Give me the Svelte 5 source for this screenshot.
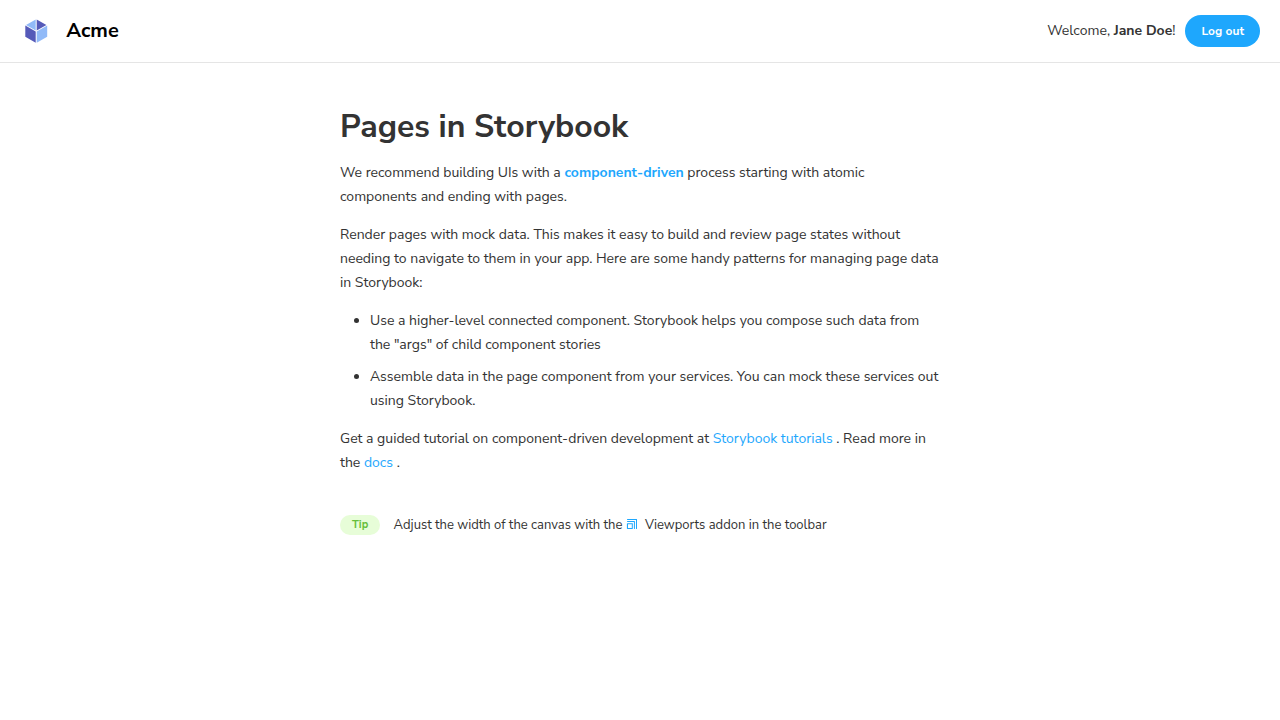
<script>
  let user = $state({ name: 'Jane Doe' });
</script>

<article>
  <header>
    <div class="storybook-header">
      <div class="brand">
        <svg width="32" height="32" viewBox="0 0 32 32" xmlns="http://www.w3.org/2000/svg" aria-hidden="true">
          <g fill="none" fill-rule="evenodd">
            <path d="M10 0h12a10 10 0 0110 10v12a10 10 0 01-10 10H10A10 10 0 010 22V10A10 10 0 0110 0z" fill="#FFF" />
            <path d="M5.3 10.6l10.4 6v11.1l-10.4-6v-11zm11.4-6.2l9.7 5.5-9.7 5.6V4.4z" fill="#555AB9" />
            <path d="M27.2 10.6v11.2l-10.5 6V16.5l10.5-6zM15.7 4.4v11L6 10l9.7-5.5z" fill="#91BAF8" />
          </g>
        </svg>
        <h1>Acme</h1>
      </div>
      <div class="account">
        {#if user}
          <span class="welcome">Welcome, <b>{user.name}</b>!</span>
        {/if}
        <button type="button">Log out</button>
      </div>
    </div>
  </header>

  <section class="storybook-page">
    <h2>Pages in Storybook</h2>
    <p>
      We recommend building UIs with a
      <a href="#component-driven"><strong>component-driven</strong></a>
      process starting with atomic components and ending with pages.
    </p>
    <p>
      Render pages with mock data. This makes it easy to build and review page states without
      needing to navigate to them in your app. Here are some handy patterns for managing page data
      in Storybook:
    </p>
    <ul>
      <li>
        Use a higher-level connected component. Storybook helps you compose such data from the
        "args" of child component stories
      </li>
      <li>
        Assemble data in the page component from your services. You can mock these services out
        using Storybook.
      </li>
    </ul>
    <p>
      Get a guided tutorial on component-driven development at
      <a href="#tutorials">Storybook tutorials</a>
      . Read more in the
      <a href="#docs">docs</a>
      .
    </p>
    <div class="tip-wrapper">
      <span class="tip">Tip</span>
      Adjust the width of the canvas with the
      <svg width="10" height="10" viewBox="0 0 12 12" xmlns="http://www.w3.org/2000/svg" aria-hidden="true">
        <g fill="none" fill-rule="evenodd">
          <path
            d="M1.5 5.2h4.8c.3 0 .5.2.5.4v5.1c-.1.2-.3.3-.4.3H1.4a.5.5 0 01-.5-.4V5.7c0-.3.2-.5.5-.5zm0-2.1h6.9c.3 0 .5.2.5.4v7a.5.5 0 01-1 0V4H1.5a.5.5 0 010-1zm0-2.1h9c.3 0 .5.2.5.4v9.1a.5.5 0 01-1 0V2H1.5a.5.5 0 010-1zm4.3 5.2H2V10h3.8V6.2z"
            fill="#999"
          />
        </g>
      </svg>
      Viewports addon in the toolbar
    </div>
  </section>
</article>

<style>
  :global(body) {
    margin: 0;
    background: #fff;
  }

  article {
    font-family: 'Nunito Sans', Nunito, 'Open Sans', 'Helvetica Neue', Arial, sans-serif;
  }

  .storybook-header {
    display: flex;
    align-items: center;
    justify-content: space-between;
    border-bottom: 1px solid rgba(0, 0, 0, 0.1);
    padding: 15px 20px;
  }

  .storybook-header svg {
    display: inline-block;
    vertical-align: top;
  }

  .storybook-header h1 {
    display: inline-block;
    vertical-align: top;
    margin: 6px 0 6px 10px;
    font-weight: 700;
    font-size: 20px;
    line-height: 1;
  }

  .account {
    display: flex;
    align-items: baseline;
    gap: 10px;
  }

  button {
    cursor: pointer;
    border: 0;
    border-radius: 3em;
    background: #1ea7fd;
    padding: 10px 16px;
    color: white;
    font-family: inherit;
    font-weight: 700;
    font-size: 12px;
    line-height: 1;
  }

  .welcome {
    color: #333;
    font-size: 14px;
  }

  .storybook-page {
    box-sizing: border-box;
    max-width: 640px;
    margin: 0 auto;
    padding: 48px 20px;
    color: #333;
    font-size: 14px;
    line-height: 24px;
  }

  h2 {
    display: inline-block;
    vertical-align: top;
    margin: 0 0 4px;
    font-weight: 700;
    font-size: 32px;
    line-height: 1;
  }

  p {
    margin: 1em 0;
  }

  a {
    color: #1ea7fd;
    text-decoration: none;
  }

  ul {
    margin: 1em 0;
    padding-left: 30px;
  }

  li {
    margin-bottom: 8px;
  }

  .tip-wrapper {
    margin: 40px 0;
    font-size: 13px;
    line-height: 20px;
  }

  .tip {
    display: inline-block;
    vertical-align: top;
    margin-right: 10px;
    border-radius: 1em;
    background: #e7fdd8;
    padding: 4px 12px;
    color: #66bf3c;
    font-weight: 700;
    font-size: 11px;
    line-height: 12px;
  }

  .tip-wrapper svg {
    display: inline-block;
    vertical-align: top;
    margin: 3px 4px 0 0;
    width: 12px;
    height: 12px;
  }

  .tip-wrapper svg path {
    fill: #1ea7fd;
  }
</style>
